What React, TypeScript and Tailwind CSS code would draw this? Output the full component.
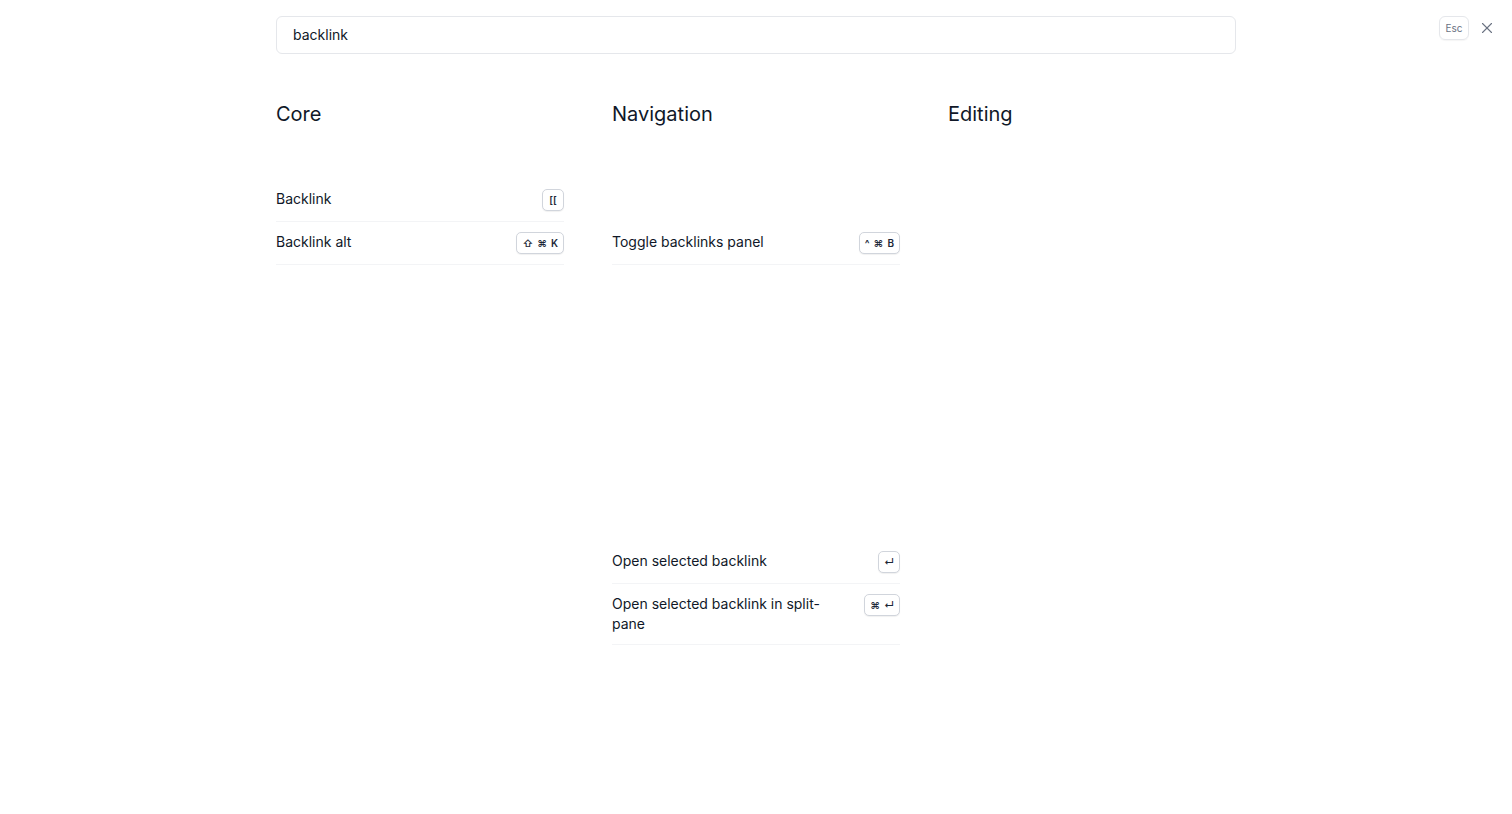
import { X } from 'lucide-react';

type Item = { label: string; keys: string[] };

function Kbd({ keys }: { keys: string[] }) {
  return (
    <span className="flex h-[22px] min-w-[22px] shrink-0 items-center justify-center gap-[4px] rounded-[5px] border border-gray-300 bg-white px-[5px] text-[10px] font-semibold leading-none text-gray-800 shadow-[0_1px_1px_rgba(0,0,0,0.06)]">
      {keys.map((k, i) => (
        <span key={i}>{k}</span>
      ))}
    </span>
  );
}

function Row({ item }: { item: Item }) {
  return (
    <div className="flex items-start justify-between gap-4 border-b border-gray-100 py-[10px]">
      <span className="pr-2 text-[14px] leading-5 text-gray-900">{item.label}</span>
      <Kbd keys={item.keys} />
    </div>
  );
}

function Section({ title, children }: { title: string; children?: React.ReactNode }) {
  return (
    <div className="flex flex-col">
      <h2 className="mb-[51px] text-[20px] leading-7 font-normal text-gray-900">{title}</h2>
      {children}
    </div>
  );
}

export default function App() {
  return (
    <div className="relative min-h-screen bg-white font-['Inter','Liberation_Sans',sans-serif]">
      {/* close controls */}
      <div className="absolute top-4 right-[16px] flex items-center gap-[9px]">
        <span className="flex h-6 w-[30px] items-center justify-center rounded-md border border-gray-200 text-[10px] text-gray-500 shadow-[0_1px_1px_rgba(0,0,0,0.04)]">
          Esc
        </span>
        <X size={18} strokeWidth={1.5} className="text-gray-500" />
      </div>

      <div className="mx-auto w-[960px] pt-4">
        <div className="flex h-[38px] items-center rounded-md border border-gray-200 px-4 pb-px text-[14px] text-gray-900">
          backlink
        </div>

        <div className="mt-[46px] grid grid-cols-3 gap-12">
          <Section title="Core">
            <Row item={{ label: 'Backlink', keys: ['[['] }} />
            <Row item={{ label: 'Backlink alt', keys: ['⇧', '⌘', 'K'] }} />
          </Section>

          <Section title="Navigation">
            <div className="h-[43px]" />
            <Row item={{ label: 'Toggle backlinks panel', keys: ['^', '⌘', 'B'] }} />
            <div className="h-[276px]" />
            <Row item={{ label: 'Open selected backlink', keys: ['↵'] }} />
            <Row item={{ label: 'Open selected backlink in split-pane', keys: ['⌘', '↵'] }} />
          </Section>

          <Section title="Editing" />
        </div>
      </div>
    </div>
  );
}
